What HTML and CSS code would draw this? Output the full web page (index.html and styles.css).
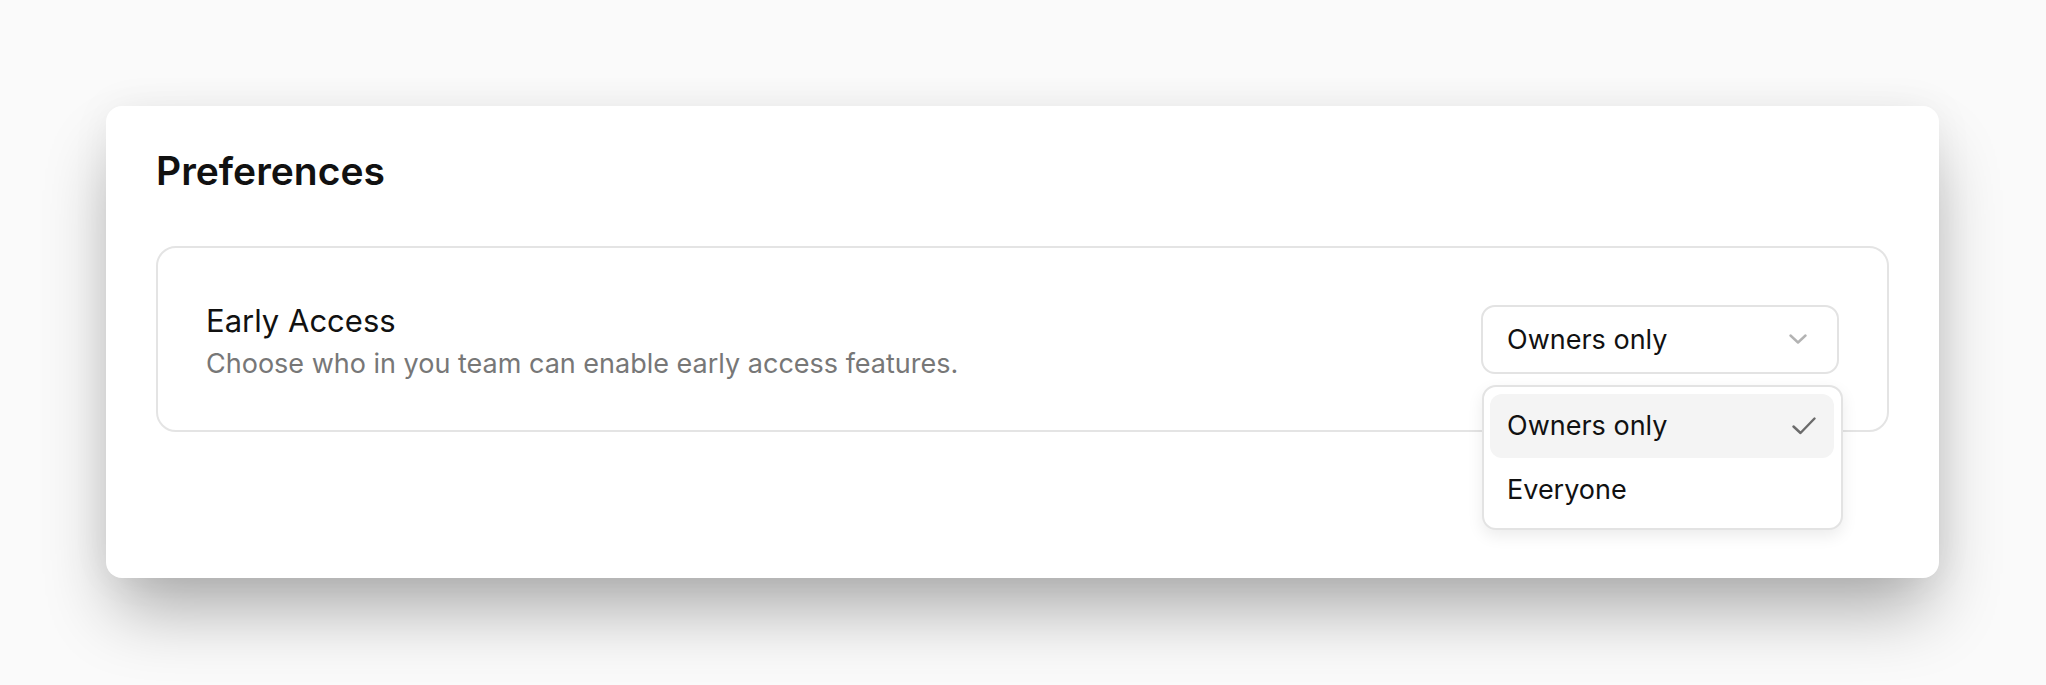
FILE: index.html
```html
<!DOCTYPE html>
<html lang="en">
<head>
  <meta charset="UTF-8">
  <title>Preferences</title>
  <link rel="stylesheet" href="styles.css">
</head>
<body>
  <div class="page">
    <div class="card">
      <h2 class="card-title">Preferences</h2>
      <div class="setting">
        <div class="setting-text">
          <div class="setting-name">Early Access</div>
          <div class="setting-desc">Choose who in you team can enable early access features.</div>
        </div>
        <div class="select-wrap">
          <button class="select" type="button">
            <span>Owners only</span>
            <svg class="chevron" width="18" height="10" viewBox="0 0 18 10" fill="none">
              <path d="M1.5 1.5L9 8.5L16.5 1.5" stroke="#b3b3b3" stroke-width="2.4" stroke-linecap="round" stroke-linejoin="round"/>
            </svg>
          </button>
          <ul class="menu">
            <li class="menu-item active">
              <span>Owners only</span>
              <svg class="check" width="24" height="18" viewBox="0 0 24 18" fill="none">
                <path d="M1.5 9.5L8.5 16L22.5 1.5" stroke="#6b6b6b" stroke-width="2.4" stroke-linecap="round" stroke-linejoin="round"/>
              </svg>
            </li>
            <li class="menu-item">
              <span>Everyone</span>
            </li>
          </ul>
        </div>
      </div>
    </div>
  </div>
</body>
</html>
```

FILE: styles.css
```css
body {
  margin: 0;
  background-color: #fafafa;
  font-family: Inter, "Noto Sans", sans-serif;
  color: #111;
}
.page {
  padding: 106px 107px 107px 106px;
}
.card {
  background-color: #fff;
  border-radius: 16px;
  padding: 41px 50px 146px;
  box-shadow: 0 40px 70px -10px rgba(0,0,0,0.32), 0 0 40px rgba(0,0,0,0.05);
}
.card-title {
  margin: 0 0 51px;
  font-size: 39px;
  line-height: 48px;
  font-weight: 600;
}
.setting {
  height: 186px;
  box-sizing: border-box;
  border: 2px solid #e4e4e4;
  border-radius: 20px;
  padding: 0 48px;
  display: flex;
  align-items: center;
  justify-content: space-between;
}
.setting-text {
  padding-top: 6px;
}
.setting-name {
  font-size: 31px;
  line-height: 40px;
}
.setting-desc {
  margin-top: 3px;
  font-size: 27px;
  line-height: 40px;
  color: #777;
}
.select-wrap {
  position: relative;
}
.select {
  width: 358px;
  height: 69px;
  box-sizing: border-box;
  border: 2px solid #e3e3e3;
  border-radius: 14px;
  background: #fff;
  padding: 0 30px 0 24px;
  display: flex;
  align-items: center;
  justify-content: space-between;
  font-family: inherit;
  font-size: 27px;
  color: #111;
}
.menu {
  position: absolute;
  top: calc(100% + 11px);
  left: 1px;
  width: 361px;
  box-sizing: border-box;
  margin: 0;
  padding: 7px 7px 6px 6px;
  list-style: none;
  background: #fff;
  border: 2px solid #e3e3e3;
  border-radius: 14px;
  box-shadow: 0 6px 16px rgba(0,0,0,0.08);
}
.menu-item {
  height: 64px;
  padding: 0 18px 0 17px;
  display: flex;
  align-items: center;
  justify-content: space-between;
  border-radius: 12px;
  font-size: 27px;
}
.menu-item.active {
  background-color: #f4f4f4;
}
```
